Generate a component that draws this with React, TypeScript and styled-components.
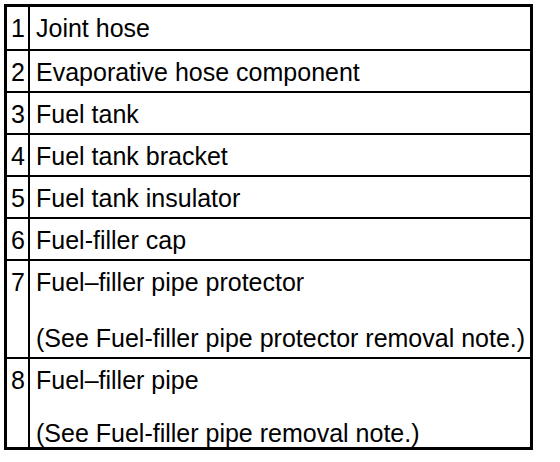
import React from "react";
import styled, { createGlobalStyle } from "styled-components";

const Global = createGlobalStyle`
  html, body { margin: 0; padding: 0; background: #ffffff; }
  body { font-family: "Liberation Sans", Arial, Helvetica, sans-serif; color: #000; }
`;

const Page = styled.div`
  padding: 4px 0 0 4px;
`;

const Table = styled.div`
  width: 529px;
  box-sizing: border-box;
  border: 3px solid #000;
  display: flex;
  flex-direction: column;
`;

const Row = styled.div<{ $h: number; $last?: boolean }>`
  display: grid;
  grid-template-columns: 23px 1fr;
  height: ${(p) => p.$h}px;
  border-bottom: ${(p) => (p.$last ? "none" : "2px solid #000")};
`;

const Num = styled.div`
  border-right: 2px solid #000;
  font-size: 25px;
  line-height: 42px;
  padding-left: 4px;
`;

const Desc = styled.div`
  font-size: 25px;
  line-height: 42px;
  padding-left: 6px;
  white-space: nowrap;
`;

const Note = styled.div<{ $gap: number }>`
  margin-top: ${(p) => p.$gap}px;
`;

type Item = { n: number; text: string; note?: string; h: number; gap?: number };

const items: Item[] = [
  { n: 1, text: "Joint hose", h: 42 },
  { n: 2, text: "Evaporative hose component", h: 40 },
  { n: 3, text: "Fuel tank", h: 40 },
  { n: 4, text: "Fuel tank bracket", h: 40 },
  { n: 5, text: "Fuel tank insulator", h: 40 },
  { n: 6, text: "Fuel-filler cap", h: 40 },
  {
    n: 7,
    text: "Fuel\u2013filler pipe protector",
    note: "(See Fuel-filler pipe protector removal note.)",
    h: 96,
    gap: 14,
  },
  {
    n: 8,
    text: "Fuel\u2013filler pipe",
    note: "(See Fuel-filler pipe removal note.)",
    h: 88,
    gap: 11,
  },
];

export default function App() {
  return (
    <>
      <Global />
      <Page>
        <Table>
          {items.map((it, i) => (
            <Row key={it.n} $h={it.h} $last={i === items.length - 1}>
              <Num>{it.n}</Num>
              <Desc>
                <div>{it.text}</div>
                {it.note && <Note $gap={it.gap ?? 14}>{it.note}</Note>}
              </Desc>
            </Row>
          ))}
        </Table>
      </Page>
    </>
  );
}
